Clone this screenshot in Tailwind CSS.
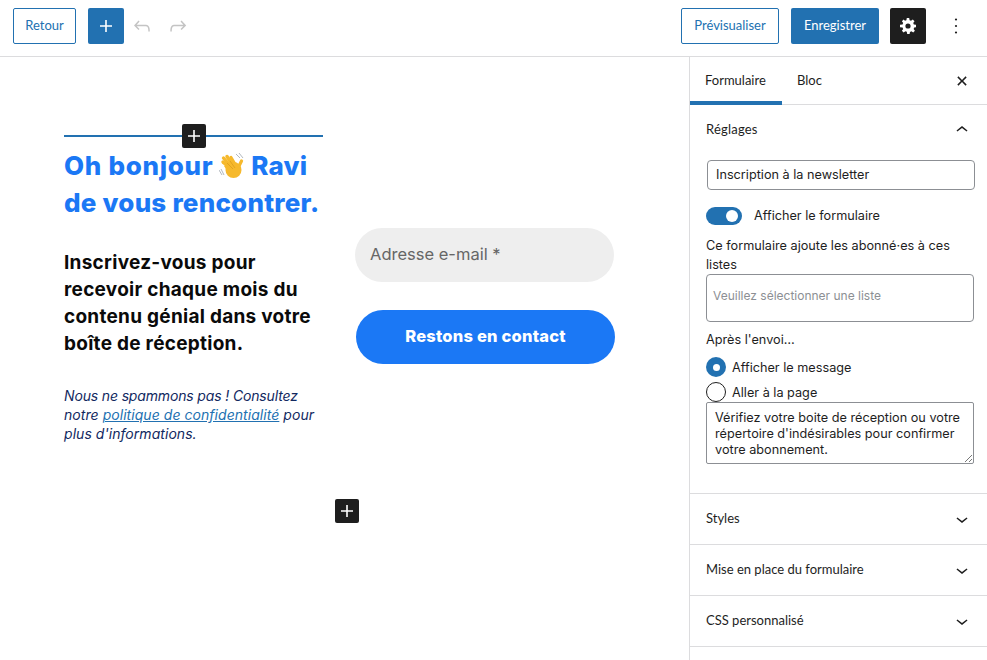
<!DOCTYPE html>
<html lang="fr">
<head>
  <meta charset="UTF-8" />
  <title>Formulaire</title>
  <script src="https://cdn.jsdelivr.net/npm/@tailwindcss/browser@4"></script>
</head>
<body class="bg-white font-['Lato','Open_Sans',sans-serif] h-[660px] w-[987px] overflow-hidden text-[#1e1e1e]">
  <!-- Barre du haut -->
  <header class="h-[57px] border-b border-[#dcdcde] flex items-center pl-[13px] pr-[19px] pb-[4px]">
    <button class="h-9 w-[63px] border border-[#2271b1] rounded-[2px] text-[#2271b1] text-[13px]">Retour</button>
    <button class="h-9 w-9 ml-3 bg-[#2271b1] rounded-[2px] flex items-center justify-center">
      <svg width="24" height="24" viewBox="0 0 24 24" fill="#fff"><path d="M18 11.2h-5.2V6h-1.600v5.200H6v1.600h5.200V18h1.600v-5.200H18z"/></svg>
    </button>
    <svg class="ml-[6px]" width="24" height="24" viewBox="0 0 24 24" fill="#c4c4c4"><path d="M18.300 11.700c-.6-.6-1.400-.9-2.300-.9H6.700l2.900-3.300-1.100-1-4.500 5L8.500 16l1-1-2.700-2.700H16c.5 0 .9.2 1.300.5 1 1 1 3.400 1 4.500v.3h1.500v-.2c0-1.500 0-4.300-1.500-5.700z"/></svg>
    <svg class="ml-3" width="24" height="24" viewBox="0 0 24 24" fill="#c4c4c4"><path d="M15.600 6.500l-1.100 1 2.900 3.300H8c-.9 0-1.700.3-2.300.9-1.400 1.500-1.400 4.200-1.400 5.600v.2h1.500v-.3c0-1.100 0-3.500 1-4.500.3-.3.7-.5 1.300-.5h9.200L14.500 15l1.100 1.100 4.600-4.600-4.600-5z"/></svg>
    <div class="flex-1"></div>
    <button class="h-9 w-[98px] border border-[#2271b1] rounded-[2px] text-[#2271b1] text-[13px]">Prévisualiser</button>
    <button class="h-9 w-[88px] ml-3 bg-[#2271b1] rounded-[2px] text-white text-[13px]">Enregistrer</button>
    <button class="h-9 w-9 ml-[11px] bg-[#1e1e1e] rounded-[2px] flex items-center justify-center">
      <svg width="24" height="24" viewBox="0 0 24 24" fill="#fff"><path fill-rule="evenodd" d="M20 13.200v-2.400l-2.200-.4c-.1-.5-.3-1-.6-1.400l1.300-1.800-1.700-1.700-1.800 1.300c-.4-.3-.9-.5-1.400-.6L13.200 4h-2.400l-.4 2.200c-.5.1-1 .3-1.400.6L7.600 5.500 5.900 7.200l1.300 1.800c-.3.4-.5.9-.6 1.400l-2.600.4v2.400l2.600.4c.1.5.3 1 .6 1.400l-1.300 1.800 1.700 1.700 1.800-1.300c.4.3.9.5 1.400.6l.4 2.200h2.400l.4-2.200c.5-.1 1-.3 1.400-.6l1.800 1.300 1.700-1.700-1.300-1.800c.3-.4.5-.9.6-1.400zM12 14.600a2.600 2.600 0 1 1 0-5.200 2.600 2.600 0 0 1 0 5.200z"/></svg>
    </button>
    <svg class="ml-[18px]" width="24" height="24" viewBox="0 0 24 24" fill="#1e1e1e"><circle cx="12" cy="5.500" r="1.100"/><circle cx="12" cy="12" r="1.100"/><circle cx="12" cy="18.500" r="1.100"/></svg>
  </header>

  <div class="flex h-[603px]">
    <!-- Canvas -->
    <main class="w-[689px] shrink-0 pl-[64px] pt-[78px]">
      <div class="flex gap-[32px] font-['Inter',sans-serif] w-[551px]">
        <div class="w-[259px] shrink-0">
          <div class="relative h-[2px] bg-[#2271b1]">
            <button class="absolute left-[118px] -top-[11px] h-6 w-6 bg-[#1e1e1e] rounded-[2px] flex items-center justify-center">
              <svg width="24" height="24" viewBox="0 0 24 24" fill="#fff"><path d="M18 11.200h-5.200V6h-1.600v5.200H6v1.600h5.200V18h1.600v-5.200H18z"/></svg>
            </button>
          </div>
          <h1 class="mt-[10px] text-[26px] leading-[37px] font-extrabold text-[#1b78f5] tracking-[0.22px] whitespace-nowrap">
            <span class="tracking-[0.7px]">Oh bonjour</span> <svg class="inline-block align-[-5px]" width="26" height="27" viewBox="0 0 26 27" fill="none"><g stroke="#f6b92d" stroke-linecap="round"><path d="M13 17L4 9" stroke-width="3.400"/><path d="M13 15L4.500 5" stroke-width="3.400"/><path d="M15 14L8 3.500" stroke-width="3.400"/><path d="M17 13L12 4.500" stroke-width="3.200"/><path d="M19 15L22.500 8" stroke-width="3.200"/></g><circle cx="14.500" cy="17" r="8" fill="#f6b92d"/><path d="M5 13l3-1 1 7z" fill="#f6b92d"/><path d="M8 10l6 6M11 8l5 7" stroke="#d99a1c" stroke-width=".7"/><path d="M0 17l3 5M2 16l3 6M17 1l4 4M20 0l4 5" stroke="#a9b0b8" stroke-width=".9"/></svg> Ravi<br>de vous rencontrer.
          </h1>
          <p class="mt-[28px] text-[19px] leading-[27px] font-bold text-[#0a0a0a] tracking-[0.27px] whitespace-nowrap">Inscrivez-vous pour<br>recevoir chaque mois du<br>contenu génial dans votre<br>boîte de réception.</p>
          <p class="mt-[29px] text-[14px] leading-[19px] italic text-[#12295f] tracking-[0.05px] whitespace-nowrap"><span class="tracking-[-0.15px]">Nous ne spammons pas ! Consultez</span><br>notre <a class="underline text-[#2271b1]">politique de confidentialité</a> pour<br>plus d'informations.</p>
        </div>
        <div class="w-[260px] shrink-0 pt-[93px]">
          <div class="h-[54px] w-[259px] rounded-full bg-[#eeeeee] flex items-center pl-[15px] pb-[2px] text-[16.500px] text-[#666]">Adresse e-mail *</div>
          <button class="mt-[28px] ml-px h-[54px] w-[259px] rounded-full bg-[#1b78f5] text-white font-extrabold text-[16.500px] tracking-[0.2px] pb-[2px]">Restons en contact</button>
        </div>
      </div>
      <div class="mt-[56px] w-[565px] flex justify-center">
        <button class="h-6 w-6 bg-[#1e1e1e] rounded-[2px] flex items-center justify-center">
          <svg width="24" height="24" viewBox="0 0 24 24" fill="#fff"><path d="M18 11.200h-5.200V6h-1.600v5.200H6v1.600h5.200V18h1.600v-5.200H18z"/></svg>
        </button>
      </div>
    </main>

    <!-- Panneau latéral -->
    <aside class="flex-1 border-l border-[#dcdcde] text-[13px] text-[#1e1e1e]">
      <div class="h-12 relative flex border-b border-[#dcdcde]">
        <div class="w-[92px] h-[48px] border-b-[4px] border-[#2271b1] pl-[15px] pt-[14px] -mb-px">Formulaire</div>
        <div class="pl-[15px] pt-[14px]">Bloc</div>
        <svg class="absolute right-[13px] top-[12px]" width="24" height="24" viewBox="0 0 24 24" fill="#1e1e1e"><path d="M13.300 12l4.200-4.200-1.300-1.300L12 10.700 7.800 6.500 6.500 7.800l4.200 4.200-4.200 4.200 1.300 1.300 4.200-4.200 4.200 4.200 1.300-1.300z" transform="translate(12 12) scale(.85) translate(-12 -12)"/></svg>
      </div>

      <section class="h-[389px] border-b border-[#dcdcde] pl-[16px] pr-[12px]">
        <div class="flex items-center justify-between h-[50px] pb-[1px] pr-[1px]">
          <span class="tracking-[0.2px]">Réglages</span>
          <svg width="24" height="24" viewBox="0 0 24 24" fill="#1e1e1e"><path d="M6.500 12.400L12 8l5.500 4.400-.9 1.200L12 10l-4.600 3.600z"/></svg>
        </div>
        <div class="font-['Inter',sans-serif] text-[12.700px]">
          <div class="mt-[5px] ml-px h-[30px] w-[268px] border border-[#8c8f94] rounded-[4px] flex items-center pl-[8px]">Inscription à la newsletter</div>
          <div class="mt-[16px] flex items-center">
            <div class="w-[36px] h-[18px] rounded-full bg-[#2271b1] relative">
              <div class="absolute right-[4px] top-[3px] w-3 h-3 rounded-full bg-white"></div>
            </div>
            <span class="ml-[12px]">Afficher le formulaire</span>
          </div>
          <p class="mt-[11px] leading-[19px] w-[260px]">Ce formulaire ajoute les abonné·es à ces listes</p>
          <div class="h-[48px] w-[268px] border border-[#8c8f94] rounded-[4px] pl-[6px] pt-[12px] text-[12px] text-[#8c8f94]">Veuillez sélectionner une liste</div>
          <p class="mt-[8px] leading-[19px]">Après l'envoi…</p>
          <div class="mt-[8px] flex items-center h-[20px]">
            <div class="w-5 h-5 rounded-full bg-[#2271b1] flex items-center justify-center"><div class="w-[7px] h-[7px] rounded-full bg-white"></div></div>
            <span class="ml-[6px]">Afficher le message</span>
          </div>
          <div class="mt-[5px] flex items-center h-[20px]">
            <div class="w-5 h-5 rounded-full border border-[#1e1e1e]"></div>
            <span class="ml-[6px]">Aller à la page</span>
          </div>
          <div class="relative h-[62px] w-[268px] border border-[#8c8f94] rounded-[2px] pl-[8px] pr-[4px] pt-[7px] leading-[16px]">Vérifiez votre boite de réception ou votre répertoire d'indésirables pour confirmer votre abonnement.
            <svg class="absolute right-0 bottom-0" width="9" height="9" viewBox="0 0 9 9" stroke="#777" fill="none"><path d="M1 8l7-7M5 8l3-3"/></svg>
          </div>
        </div>
      </section>

      <div class="h-[51px] border-b border-[#dcdcde] pl-[16px] pr-[13px] flex items-center justify-between"><span>Styles</span><svg width="24" height="24" viewBox="0 0 24 24" fill="#1e1e1e"><path d="M17.500 11.600L12 16l-5.500-4.400.9-1.200L12 14l4.600-3.600z"/></svg></div>
      <div class="h-[51px] border-b border-[#dcdcde] pl-[16px] pr-[13px] flex items-center justify-between"><span>Mise en place du formulaire</span><svg width="24" height="24" viewBox="0 0 24 24" fill="#1e1e1e"><path d="M17.500 11.600L12 16l-5.500-4.400.9-1.200L12 14l4.600-3.600z"/></svg></div>
      <div class="h-[51px] border-b border-[#dcdcde] pl-[16px] pr-[13px] flex items-center justify-between"><span>CSS personnalisé</span><svg width="24" height="24" viewBox="0 0 24 24" fill="#1e1e1e"><path d="M17.500 11.600L12 16l-5.500-4.400.9-1.200L12 14l4.600-3.600z"/></svg></div>
    </aside>
  </div>
</body>
</html>
